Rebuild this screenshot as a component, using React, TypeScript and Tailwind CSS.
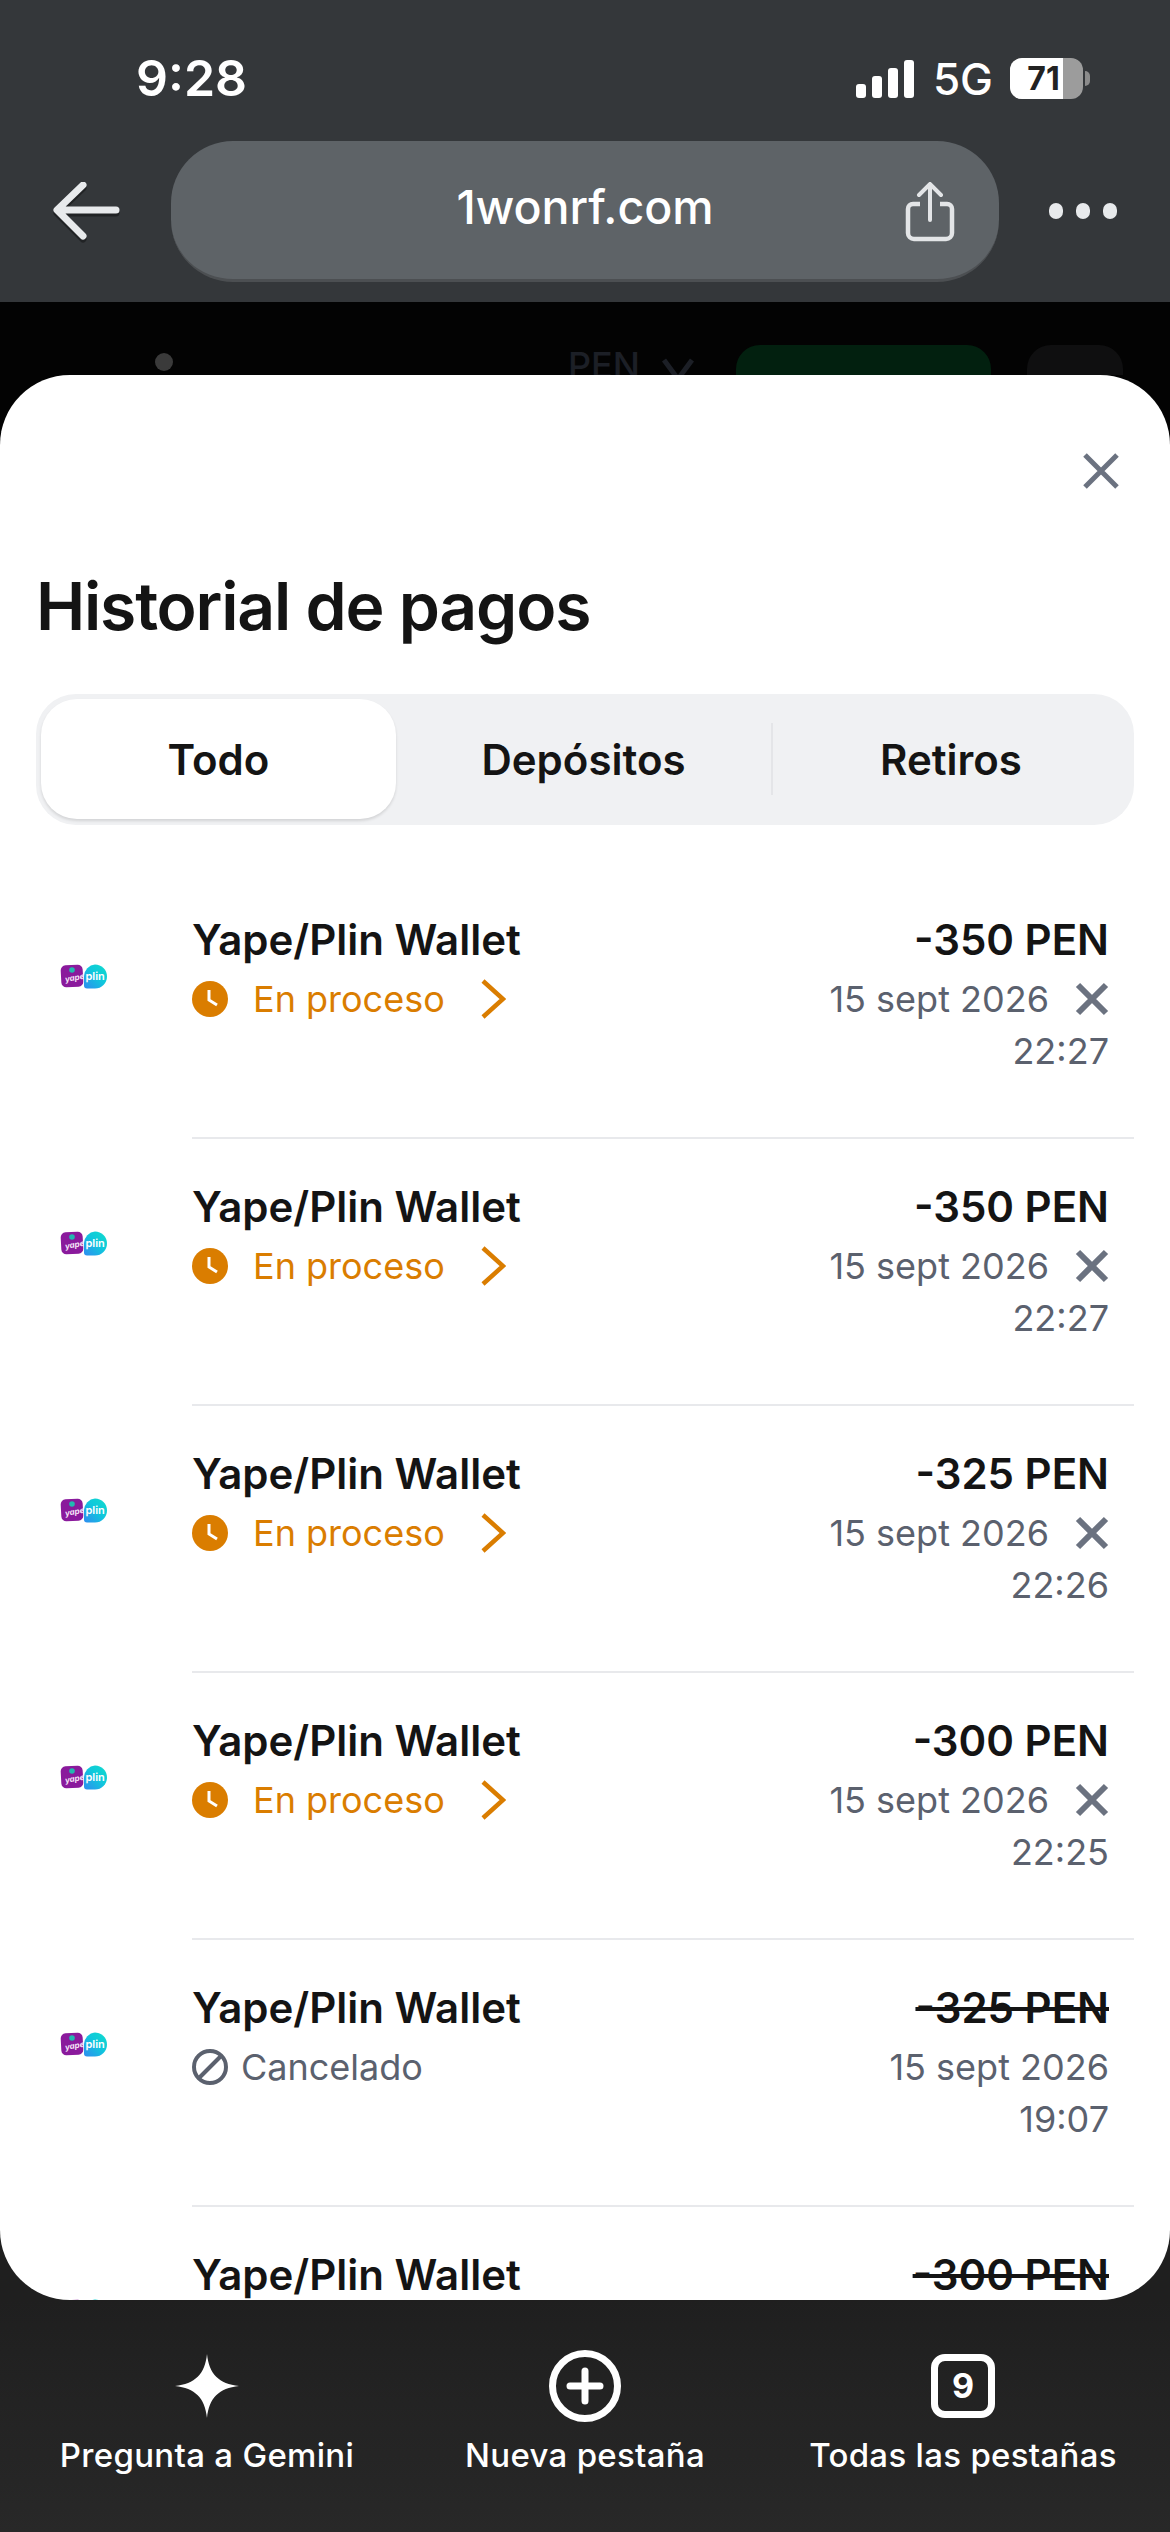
const rows = [
  { amount: "-350 PEN", time: "22:27", pending: true },
  { amount: "-350 PEN", time: "22:27", pending: true },
  { amount: "-325 PEN", time: "22:26", pending: true },
  { amount: "-300 PEN", time: "22:25", pending: true },
  { amount: "-325 PEN", time: "19:07", pending: false },
  { amount: "-300 PEN", time: "", pending: false, cut: true },
];

function PayLogo() {
  return (
    <svg width="47" height="25" viewBox="0 0 47 25" className="shrink-0">
      <defs>
        <linearGradient id="plinFill" x1="0" y1="1" x2="1" y2="0">
          <stop offset="0" stopColor="#2f8cf0" />
          <stop offset="0.55" stopColor="#0fc8dc" />
          <stop offset="1" stopColor="#10dccb" />
        </linearGradient>
      </defs>
      <rect x="1" y="1" width="22" height="22" rx="5" fill="#8a1a9c" transform="rotate(-3 12 12)" />
      <circle cx="12" cy="6" r="2.8" fill="#22b8b0" />
      <text x="5" y="17" fontSize="8" fontWeight="700" fontStyle="italic" fill="#f6e6f8" fontFamily="Inter, sans-serif" transform="rotate(-10 12 15)">yape</text>
      <path d="M35 0.5a12 12 0 0 1 0 24h-8c-2 0-3-1-3-3V12A12 12 0 0 1 35 0.5z" fill="url(#plinFill)" />
      <text x="25.5" y="16" fontSize="11" fontWeight="600" fill="#fff" fontFamily="Inter, sans-serif">plin</text>
    </svg>
  );
}

function PaymentRow({ amount, time, pending, cut }: { amount: string; time: string; pending: boolean; cut?: boolean }) {
  return (
    <div className="flex h-[267px] shrink-0">
      <div className={`w-[156px] shrink-0 pt-[92px] pl-[24px] ${cut ? "[&_text]:hidden" : ""}`}>
        <PayLogo />
      </div>
      <div className="flex flex-1 justify-between border-b-2 border-[#e8e9ec] pt-[42px] pr-[25px]">
        <div>
          <div className="text-[42px] leading-[52px] font-semibold text-[#141414]">Yape/Plin Wallet</div>
          {pending && (
            <div className="mt-[8px] flex h-[50px] items-center text-[36px] text-[#da7d00]">
              <svg width="36" height="36" viewBox="0 0 36 36">
                <circle cx="18" cy="18" r="18" fill="#da7d00" />
                <path d="M17 9v10l8 5" fill="none" stroke="#fff" strokeWidth="3" />
              </svg>
              <span className="ml-[25px]">En proceso</span>
              <svg width="26" height="40" viewBox="0 0 26 40" className="ml-[35px]">
                <path d="M3 2 L23 20 L3 38" fill="none" stroke="#da7d00" strokeWidth="4.5" />
              </svg>
            </div>
          )}
          {!pending && !cut && (
            <div className="mt-[8px] flex h-[50px] items-center text-[36px] text-[#5b616e]">
              <svg width="36" height="36" viewBox="0 0 36 36">
                <circle cx="18" cy="18" r="16" fill="none" stroke="#5b616e" strokeWidth="4" />
                <path d="M7 29 L29 7" stroke="#5b616e" strokeWidth="4" />
              </svg>
              <span className="ml-[13px]">Cancelado</span>
            </div>
          )}
        </div>
        <div className="flex flex-col items-end">
          <div className={`text-[42px] leading-[52px] font-semibold text-[#141414] ${pending ? "" : "line-through"}`}>{amount}</div>
          {!cut && (
            <div className="mt-[8px] flex h-[50px] items-center text-[36px] text-[#5b616e]">
              <span>15 sept 2026</span>
              {pending && (
                <svg width="34" height="34" viewBox="0 0 34 34" className="ml-[26px]">
                  <path d="M3 3 L31 31 M31 3 L3 31" stroke="#6b7280" strokeWidth="6" />
                </svg>
              )}
            </div>
          )}
          {time && <div className="text-[36px] leading-[54px] text-[#5b616e]">{time}</div>}
        </div>
      </div>
    </div>
  );
}

function BottomAction({ label, children }: { label: string; children: React.ReactNode }) {
  return (
    <div className="flex w-[378px] flex-col items-center">
      <div className="flex h-[72px] items-center justify-center">{children}</div>
      <div className="mt-[12px] text-[33px] leading-[42px] font-medium tracking-[0.3px] text-white">{label}</div>
    </div>
  );
}

export default function App() {
  return (
    <div className="flex h-[2532px] w-[1170px] flex-col overflow-hidden bg-black font-['Inter',sans-serif]">
      {/* browser chrome */}
      <div className="h-[302px] shrink-0 bg-[#34373a]">
        <div className="flex h-[141px] items-start justify-between pt-[50px] pr-[80px] pl-[136px]">
          <div className="text-[50px] leading-[56px] font-semibold text-white">9:28</div>
          <div className="flex items-center pt-[8px]">
            <svg width="58" height="38" viewBox="0 0 58 38">
              <rect x="0" y="24" width="10" height="14" rx="3" fill="#fff" />
              <rect x="16" y="16" width="10" height="22" rx="3" fill="#fff" />
              <rect x="32" y="8" width="10" height="30" rx="3" fill="#fff" />
              <rect x="48" y="0" width="10" height="38" rx="3" fill="#fff" />
            </svg>
            <span className="ml-[19px] text-[44px] leading-[40px] font-medium text-white">5G</span>
            <div className="ml-[17px] flex h-[41px] w-[73px] items-center overflow-hidden rounded-[12px] bg-[#9c9c9c]">
              <div className="flex h-full w-[53px] items-center justify-center bg-white pl-[14px] text-[32px] leading-none font-bold text-[#222]">71</div>
            </div>
            <div className="ml-[2px] h-[15px] w-[5px] rounded-r-full bg-[#8b8b8b]" />
          </div>
        </div>
        <div className="flex items-start pl-[52px]">
          <svg width="68" height="58" viewBox="0 0 68 58" className="mt-[41px] drop-shadow-[0_3px_0_rgba(0,0,0,0.35)]">
            <path d="M64 28 H8 M31 3 L5 28 L31 54" fill="none" stroke="#e8eaec" strokeWidth="7" strokeLinecap="round" strokeLinejoin="round" />
          </svg>
          <div className="relative ml-[51px] flex h-[141px] w-[828px] items-center justify-center rounded-[62px] border-b-[3px] border-[#4c4f52] bg-[#5e6367] pb-[5px]">
            <span className="text-[46.5px] leading-none font-medium text-white">1wonrf.com</span>
            <svg width="50" height="60" viewBox="0 0 50 60" className="absolute top-[41px] right-[44px]">
              <path d="M15 22 H8 a5 5 0 0 0 -5 5 V51 a6 6 0 0 0 6 6 H41 a6 6 0 0 0 6 -6 V27 a5 5 0 0 0 -5 -5 H35" fill="none" stroke="#e3e5e7" strokeWidth="4.5" />
              <path d="M25 38 V3 M14 13 L25 2 L36 13" fill="none" stroke="#e3e5e7" strokeWidth="4" strokeLinecap="round" />
            </svg>
          </div>
          <div className="mt-[62px] ml-[50px] flex gap-[13px]">
            <div className="h-[16px] w-[14px] rounded-full bg-[#e8eaec]" />
            <div className="h-[16px] w-[14px] rounded-full bg-[#e8eaec]" />
            <div className="h-[16px] w-[14px] rounded-full bg-[#e8eaec]" />
          </div>
        </div>
      </div>

      {/* page behind the sheet */}
      <div className="flex h-[73px] shrink-0 items-start overflow-hidden bg-[#030303] pt-[51px]">
        <div className="ml-[155px] h-[18px] w-[18px] rounded-full bg-[#3a3a3a]" />
        <span className="ml-[395px] -mt-[10px] text-[36px] leading-[44px] font-medium text-[#1c1f26]">PEN</span>
        <svg width="34" height="30" viewBox="0 0 34 30" className="mt-[4px] ml-[21px]">
          <path d="M3 3 L17 22 L31 3" fill="none" stroke="#1c1f26" strokeWidth="5" />
        </svg>
        <div className="ml-[41px] -mt-[8px] h-[60px] w-[255px] rounded-[24px] bg-[#02200f]" />
        <div className="ml-[36px] -mt-[8px] h-[60px] w-[96px] rounded-[24px] bg-[#0f0f10]" />
      </div>

      {/* sheet */}
      <div className="flex-1 overflow-hidden bg-[linear-gradient(#030303_50%,#1f1f1f_50%)]">
        <div className="flex h-full flex-col overflow-hidden rounded-[70px] bg-white px-[36px]">
          <div className="flex h-[115px] shrink-0 items-end justify-end pr-[14px]">
            <svg width="38" height="38" viewBox="0 0 38 38">
              <path d="M3 3 L35 35 M35 3 L3 35" stroke="#6b7280" strokeWidth="5" />
            </svg>
          </div>
          <h1 className="mt-[76px] text-[66px] leading-[80px] font-semibold tracking-[-1.2px] text-[#141414]">Historial de pagos</h1>
          <div className="mt-[48px] flex h-[131px] shrink-0 rounded-[40px] bg-[#f0f1f3] p-[5px]">
            <div className="flex h-[120px] w-[355px] items-center justify-center rounded-[36px] bg-white text-[42px] font-semibold text-[#141414] shadow-[0_2px_3px_rgba(0,0,0,0.12)]">Todo</div>
            <div className="flex h-[120px] w-[375px] items-center justify-center text-[42px] font-semibold text-[#141414]">Depósitos</div>
            <div className="my-[24px] h-[72px] w-[2px] bg-[#e4e5e8]" />
            <div className="flex h-[120px] flex-1 items-center justify-center text-[42px] font-semibold text-[#141414]">Retiros</div>
          </div>
          <div className="mt-[47px] flex flex-col">
            {rows.map((row, i) => (
              <PaymentRow key={i} {...row} />
            ))}
          </div>
        </div>
      </div>

      {/* bottom toolbar */}
      <div className="flex h-[232px] shrink-0 items-start justify-center bg-[linear-gradient(#1f1f1f,#282828)] pt-[50px]">
        <BottomAction label="Pregunta a Gemini">
          <svg width="64" height="64" viewBox="0 0 64 64">
            <path d="M32 0 C34 20 44 30 64 32 C44 34 34 44 32 64 C30 44 20 34 0 32 C20 30 30 20 32 0 Z" fill="#fff" />
          </svg>
        </BottomAction>
        <BottomAction label="Nueva pestaña">
          <svg width="72" height="72" viewBox="0 0 72 72">
            <circle cx="36" cy="36" r="32.5" fill="none" stroke="#fff" strokeWidth="7" />
            <path d="M36 21 V51 M21 36 H51" stroke="#fff" strokeWidth="7" strokeLinecap="round" />
          </svg>
        </BottomAction>
        <BottomAction label="Todas las pestañas">
          <div className="flex h-[64px] w-[64px] items-center justify-center rounded-[14px] border-[7px] border-white text-[34px] leading-none font-bold text-white">9</div>
        </BottomAction>
      </div>
    </div>
  );
}
